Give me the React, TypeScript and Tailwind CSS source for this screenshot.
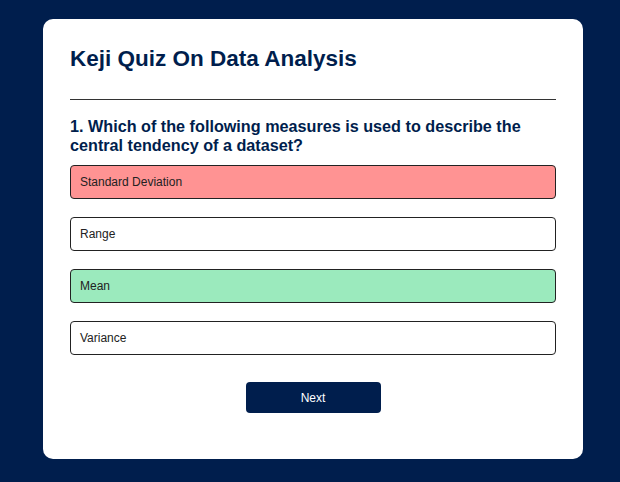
import React from "react";

const options = [
  { label: "Standard Deviation", cls: "bg-[#ff9393]" },
  { label: "Range", cls: "bg-white" },
  { label: "Mean", cls: "bg-[#9beabd]" },
  { label: "Variance", cls: "bg-white" },
];

export default function App() {
  return (
    <div className="min-h-[482px] w-[620px] bg-[#001e4d] pt-[19px] font-['Liberation_Sans',Arial,sans-serif]">
      <div className="ml-[43px] h-[440px] w-[540px] rounded-[10px] bg-white px-[27px] pt-[26px]">
        <h1 className="text-[22.5px] font-bold leading-[28px] text-[#001e4d]">Keji Quiz On Data Analysis</h1>
        <div className="mt-[26px] h-px bg-[#333]" />
        <p className="mt-[17px] text-[16.2px] font-bold leading-[19px] text-[#001e4d]">
          1. Which of the following measures is used to describe the central tendency of a dataset?
        </p>
        <div className="mt-[10px] flex flex-col gap-[18px]">
          {options.map((o) => (
            <div
              key={o.label}
              className={`h-[34px] rounded-[4px] border border-[#222] px-[9px] flex items-center text-[12px] text-[#222] ${o.cls}`}
            >
              {o.label}
            </div>
          ))}
        </div>
        <div className="mt-[27px] flex justify-center">
          <button className="h-[31px] w-[135px] rounded-[4px] bg-[#001e4d] text-[12px] text-white">Next</button>
        </div>
      </div>
    </div>
  );
}
